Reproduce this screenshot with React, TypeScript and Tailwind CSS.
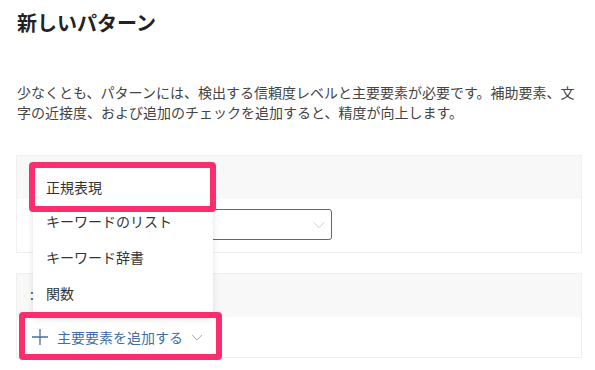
import React from "react";

const font = { fontFamily: '"Noto Sans CJK JP", "Noto Sans", sans-serif' };

function Chevron({ className }: { className?: string }) {
  return (
    <svg className={className} viewBox="0 0 16 10" fill="none" stroke="currentColor" strokeWidth="1.2">
      <path d="M1 1.5 L8 8.5 L15 1.5" />
    </svg>
  );
}

export default function App() {
  return (
    <div
      className="relative w-[595px] h-[370px] overflow-hidden bg-white text-[#333]"
      style={font}
    >
      <div className="pl-[17px] pt-[9px]">
        <h1 className="text-[20px] leading-[28px] font-semibold text-[#222]">新しいパターン</h1>
        <p className="mt-[45px] text-[14px] leading-[20px] text-[#444] w-[570px]">
          少なくとも、パターンには、検出する信頼度レベルと主要要素が必要です。補助要素、文字の近接度、および追加のチェックを追加すると、精度が向上します。
        </p>
      </div>

      <div className="ml-[16px] mt-[33px] w-[566px] border border-[#efefef]">
        <div className="h-[43px] bg-[#f8f8f8]" />
        <div className="h-[53px] bg-white pl-[16px] pt-[10px]">
          <div className="w-[299px] h-[31px] border border-[#666] rounded-[3px] flex items-center justify-end pr-[6px]">
            <Chevron className="w-[12px] h-[8px] text-[#c8c8c8]" />
          </div>
        </div>
      </div>

      <div className="ml-[16px] mt-[20px] w-[566px] border border-[#efefef]">
        <div className="h-[43px] bg-[#f8f8f8] pl-[13px] flex items-center pb-[2px]">
          <span className="text-[14px] text-[#444]">:</span>
        </div>
        <div className="h-[40px] bg-white pl-[15px] flex items-center">
          <div className="flex items-center text-[#3d6ea6]">
            <svg className="w-[16px] h-[16px]" viewBox="0 0 16 16" stroke="#4a6f9a" strokeWidth="1.3">
              <path d="M0 8 H16 M8 0 V16" />
            </svg>
            <span className="ml-[9px] text-[14px] leading-[20px]">主要要素を追加する</span>
            <Chevron className="ml-[8px] w-[12px] h-[7px] text-[#8a9bb0]" />
          </div>
        </div>
      </div>

      {/* dropdown menu */}
      <div className="absolute left-[33px] top-[166px] w-[180px] h-[151px] bg-white shadow-[0_2px_6px_rgba(0,0,0,0.12)] text-[14px] text-[#333]">
        <div className="h-[36px] pl-[13px] flex items-center pt-[6px]">正規表現</div>
        <div className="h-[36px] pl-[13px] flex items-center pt-[3px]">キーワードのリスト</div>
        <div className="h-[36px] pl-[13px] flex items-center pt-[2px]">キーワード辞書</div>
        <div className="h-[36px] pl-[13px] flex items-center pt-[2px]">関数</div>
      </div>

      {/* annotation boxes */}
      <div className="absolute left-[29px] top-[162px] w-[187px] h-[50px] border-[6px] border-[#fb2d6c] rounded-[4px]" />
      <div className="absolute left-[19px] top-[312px] w-[203px] h-[48px] border-[6px] border-[#fb2d6c] rounded-[4px]" />
    </div>
  );
}
